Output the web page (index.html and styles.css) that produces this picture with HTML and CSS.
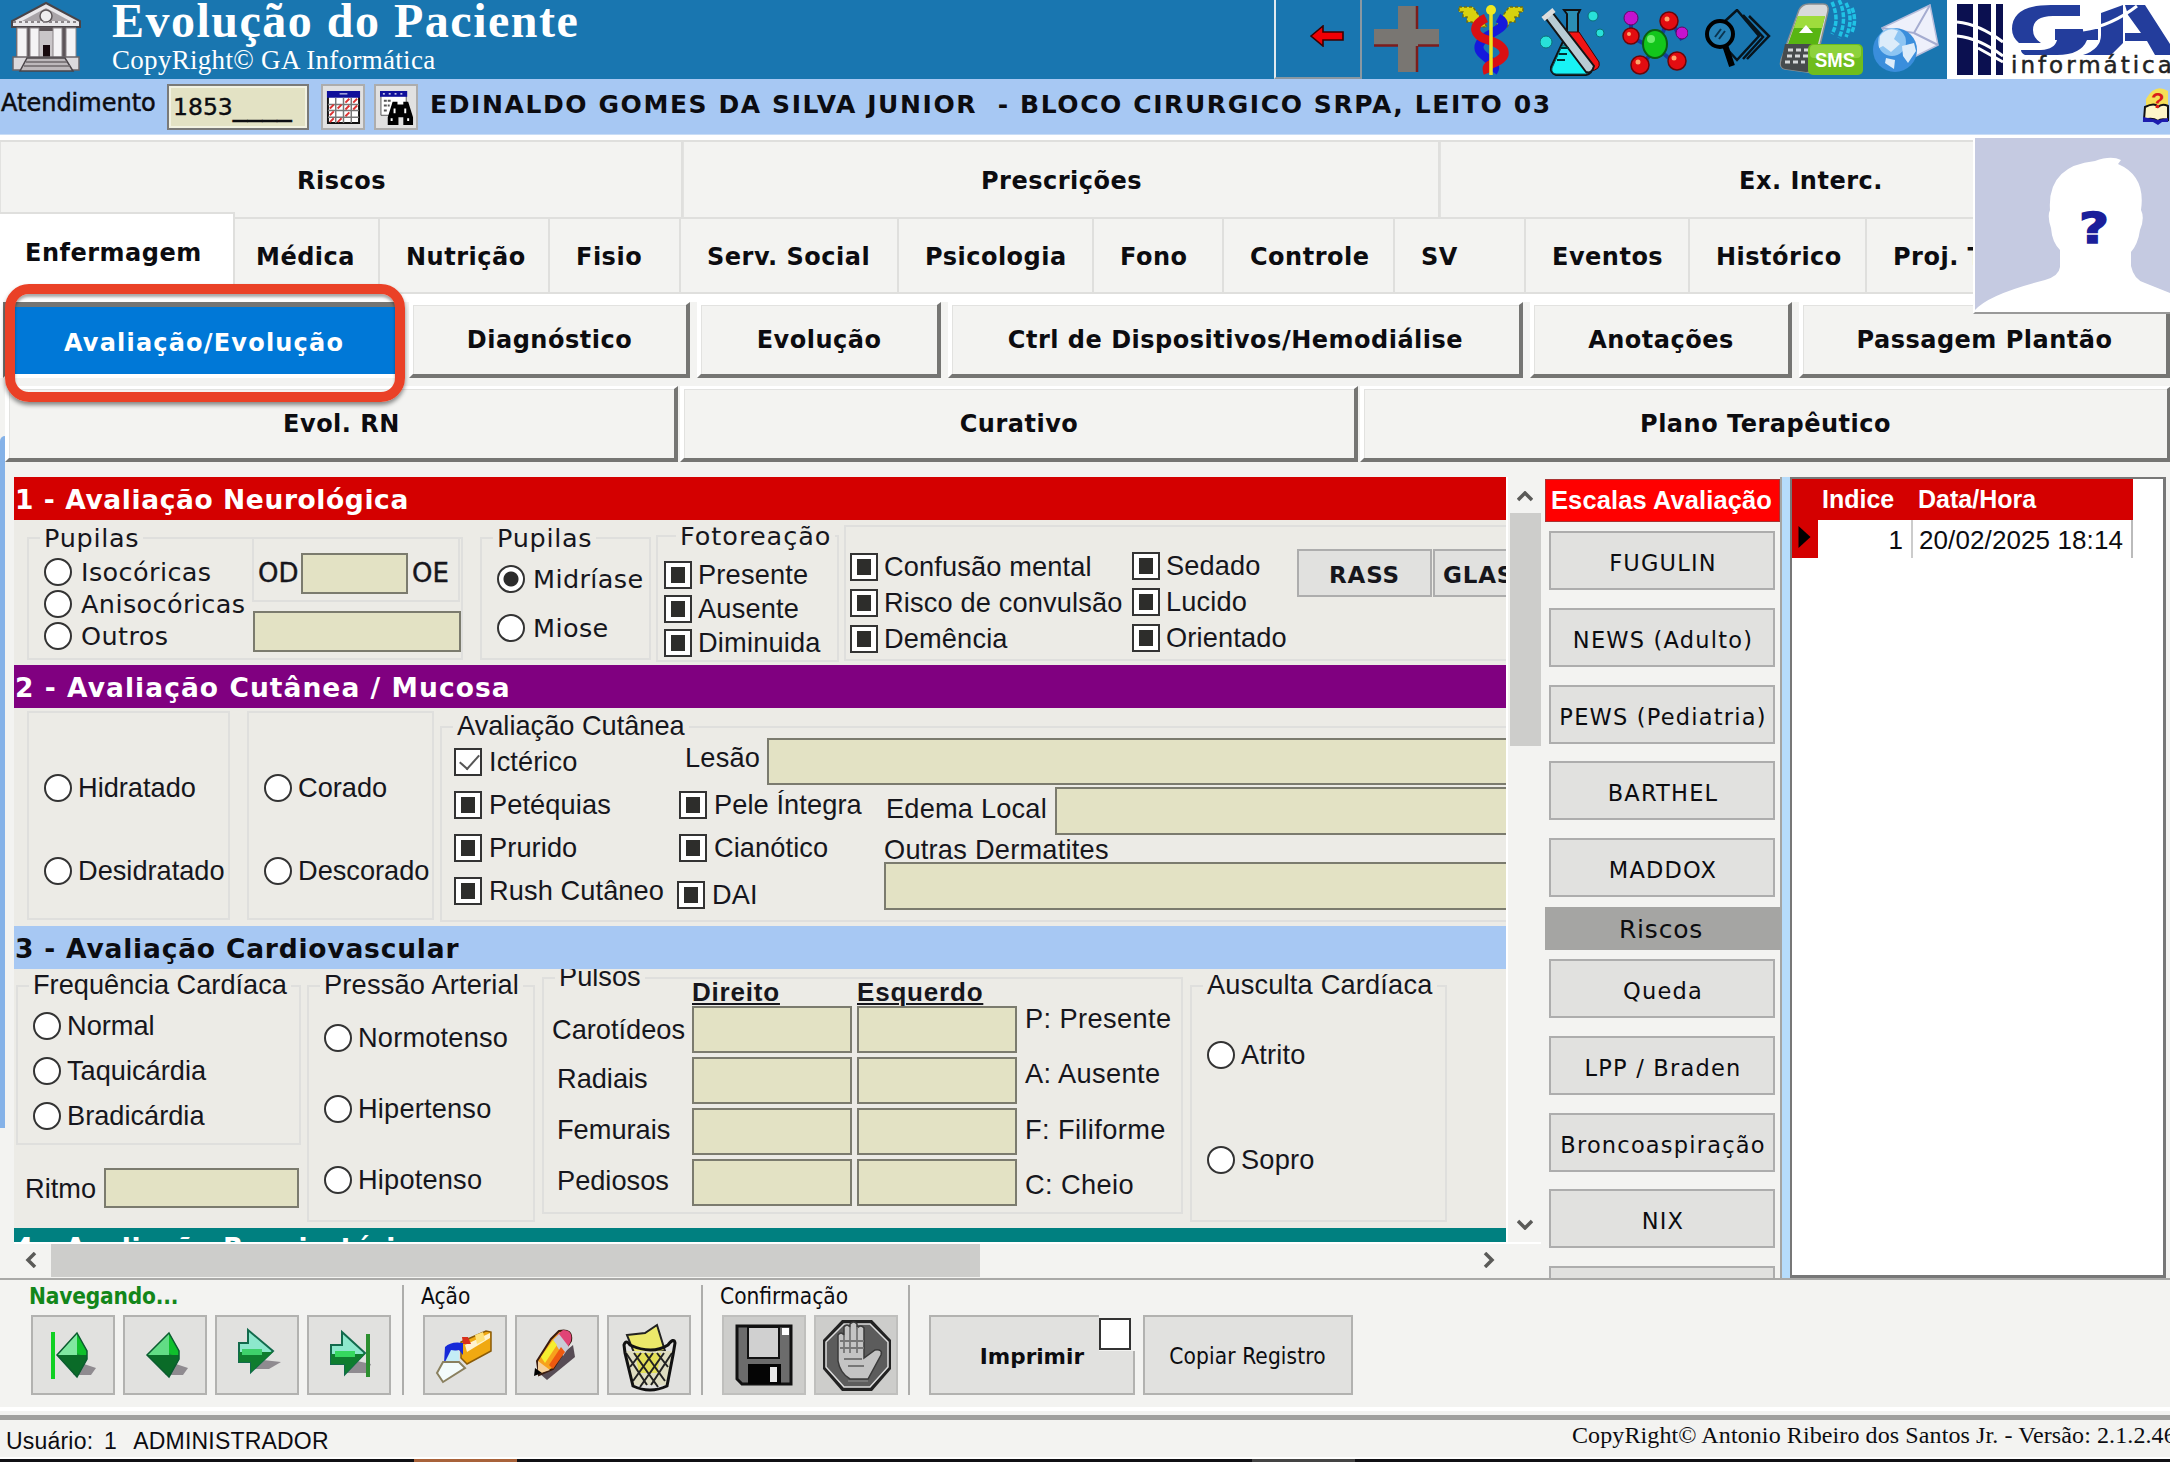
FILE: index.html
```html
<!DOCTYPE html>
<html lang="pt-BR">
<head>
<meta charset="utf-8">
<title>Evolução do Paciente</title>
<link rel="stylesheet" href="styles.css">
</head>
<body>
<header class="top">
  <svg class="temple" viewBox="0 0 72 72">
    <path d="M36 2 L70 20 V26 H2 V20Z" fill="#e9e7ea" stroke="#4a4448" stroke-width="2"/>
    <path d="M36 7 L60 20 H12Z" fill="#a9a4a8"/>
    <circle cx="36" cy="15" r="6" fill="#efeef0" stroke="#5c5659" stroke-width="1.5"/>
    <path d="M6 26h60v32H6z" fill="#5d5559"/>
    <path d="M28 30h16v28H28z" fill="#c9c5c8"/>
    <path d="M33 44h7v14h-7z" fill="#17090d"/>
    <g fill="#f4f3f5" stroke="#8a8488" stroke-width="1"><path d="M7 27h10v31H7zM20 27h9v31h-9zM43 27h9v31h-9zM56 27h10v31H56z"/></g>
    <path d="M3 56h66v13H3z" fill="#dcd9dc" stroke="#6a6468" stroke-width="1.5"/>
    <path d="M17 57h38l8 13H10z" fill="#bdb8bb" stroke="#4a4448" stroke-width="1.5"/>
    <path d="M16 61h41M14 65h46" stroke="#6f686c" stroke-width="1.5"/>
    <path d="M3 21h66" stroke="#8a8488" stroke-width="2" stroke-dasharray="3 3"/>
  </svg>
  <div class="brand"><h1>Evolução do Paciente</h1><p>CopyRight© GA Informática</p></div>
  <div class="back"><svg viewBox="0 0 34 22"><path d="M1 11 13 1v6h20v8H13v6z" fill="#f00005" stroke="#3a0000" stroke-width="1.6"/></svg></div>
  <div class="tools">
    <svg width="66" height="66" viewBox="0 0 66 66"><path d="M24 0h20v23h21v17H44v26H24V40H0V23h24z" fill="#797672"/><path d="M43 0v23M43 40v26M0 39.500h24M44 39.500h21" stroke="#7c1d1c" stroke-width="2.500"/></svg>
    <svg width="70" height="72" viewBox="0 0 70 72">
      <path d="M3 3h14l14 20H19l-3-5h-5v-5H7V8H3zM67 3H53L39 23h12l3-5h5v-5h4V8h4z" fill="#d8d20e" stroke="#6f6d10" stroke-width="1.500" stroke-dasharray="3 2"/>
      <path d="M42 14c18 10-16 14-19 28-2 12 22 14 14 26" fill="none" stroke="#1519dc" stroke-width="9"/>
      <path d="M30 14c-16 8-12 18 2 22 20 6 20 16 8 22-10 4-10 6-8 11" fill="none" stroke="#d81014" stroke-width="9"/>
      <path d="M35 3v68" stroke="#ece420" stroke-width="3.500"/><circle cx="35" cy="6" r="5" fill="#f0e820"/>
    </svg>
    <svg width="66" height="72" viewBox="0 0 66 72">
      <path d="M24 6h16l-2 4v20l14 34q0 6-6 7H16q-6-2-5-8l16-34V10z" fill="#2b8fb4" stroke="#111" stroke-width="2"/>
      <path d="M27 28h12l20 30q2 8-9 9l-12-2z" fill="#f21414" stroke="#400"/>
      <path d="M22 42h12l16 25-4 3H16q-5-1-4-6z" fill="#18f3f5" stroke="#0d4e5b"/>
      <path d="M4 12 12 8 54 62q-2 8-8 6z" fill="#b9ccd4" stroke="#151515" stroke-width="2"/>
      <path d="M3 15 14 6" stroke="#ddd" stroke-width="5"/>
      <path d="M21 44h8M19 50h8M17 56h8" stroke="#033" stroke-width="2"/>
      <g fill="#28e1d9" stroke="#0b6f78"><circle cx="6" cy="38" r="6"/><circle cx="53" cy="12" r="5"/><circle cx="60" cy="29" r="4"/></g>
    </svg>
    <svg width="66" height="64" viewBox="0 0 66 64">
      <path d="M9 8v18l24 12L46 10M52 15l8 14M33 38 18 56M36 38l18 15" fill="none" stroke="#143a9e" stroke-width="4"/>
      <ellipse cx="33" cy="33" rx="12" ry="14" fill="#13c61c" stroke="#0b5d12" stroke-width="2"/><circle cx="29" cy="28" r="4" fill="#6dee6c"/>
      <g fill="#e30d11" stroke="#6b0508" stroke-width="1.500"><circle cx="9" cy="25" r="8"/><circle cx="47" cy="10" r="9"/><circle cx="18" cy="54" r="9"/><circle cx="55" cy="50" r="9"/></g>
      <g fill="#c413cf" stroke="#5d0862"><circle cx="9" cy="7" r="7"/><circle cx="60" cy="22" r="6"/></g>
      <g fill="#ffa46a"><circle cx="7" cy="23" r="2"/><circle cx="45" cy="8" r="2.500"/><circle cx="16" cy="51" r="2.500"/><circle cx="52" cy="47" r="2.500"/></g>
    </svg>
    <svg width="68" height="60" viewBox="0 0 68 60">
      <path d="M18 14 32 1l22 26-22 24-10-11M38 6l20 22-20 22M44 7l20 20-22 23" fill="none" stroke="#07141c" stroke-width="2.500"/>
      <circle cx="15" cy="25" r="13" fill="#2682b8" stroke="#000" stroke-width="4"/><path d="m10 28 6-8M14 30l6-8" stroke="#0b3550" stroke-width="2"/>
      <path d="m20 36 7 21" stroke="#000" stroke-width="6"/>
    </svg>
    <svg width="86" height="78" viewBox="0 0 86 78">
      <path d="M20 10q3-6 10-6h14q6 0 5 7L36 66q-2 7-8 6L6 69q-6-1-4-9z" fill="#d8dadb" stroke="#8b8f91" stroke-width="1.500"/>
      <path d="M6 44h32l-5 24q-1 4-6 4L6 69q-5-1-4-7z" fill="#474b4d"/>
      <path d="M19 16h27l-7 28H9z" fill="#58b512"/><path d="M19 16h27l-3 12H15z" fill="#9fdc3c"/>
      <path d="m20 33 7-8 7 8z" fill="#fff"/>
      <path d="M9 50h22M8 56h22M6 62h20" stroke="#d5d8da" stroke-width="3" stroke-dasharray="5 3"/>
      <path d="M53 2q8 18 0 32M60 0q9 18 0 38M67 3q8 16 0 34M73 8q5 12 0 24" fill="none" stroke="#20c3e5" stroke-width="3.500" stroke-dasharray="5 1.500"/>
      <rect x="29" y="44" width="55" height="31" rx="5" fill="#6fbd1d"/><rect x="31" y="45" width="51" height="13" rx="4" fill="#8dd23c"/>
      <text x="56" y="67" class="sms" text-anchor="middle" textLength="40" lengthAdjust="spacingAndGlyphs">SMS</text>
    </svg>
    <svg width="68" height="70" viewBox="0 0 68 70">
      <path d="M10 24 58 1l8 40-34 17z" fill="#eef0fb" stroke="#b7bddb" stroke-width="1.500"/>
      <path d="m10 24 32 5L58 1M42 29l24 12" fill="none" stroke="#a5acd0" stroke-width="2"/>
      <circle cx="23" cy="46" r="22" fill="#3a8edc"/><circle cx="20" cy="38" r="14" fill="#8dc5f3"/>
      <path d="M8 32q8-10 18-5l-4 8 6 5-9 8-8-6-4 2zM30 42l12-3 2 8-8 12-5-7zM14 54l9 2-1 9-9-6z" fill="#dcecfa"/>
    </svg>
  </div>
  <div class="logo">
    <svg viewBox="0 0 223 79">
      <g fill="#0b1050"><path d="M10 4h16v71H10zM31 4h13v71H31zM49 4h7v71h-7z"/></g>
      <path d="M10 22q22 2 46 20M10 36q22 2 46 20M31 48l25 14" stroke="#fff" stroke-width="3" fill="none"/>
      <path d="M133 5H104Q65 5 65 29q0 8 7 14h22q-8-5-8-13 0-14 20-14h27z" fill="#233d9c"/>
      <path d="M108 29h43v11h-11q-6 15-30 15H78q-4-2-4-5h20q14-1 16-10h-2z" fill="#233d9c"/>
      <path d="M154 13 176 5v38l-12 12h-28q18-6 18-20z" fill="#233d9c"/>
      <path d="M178 5h20l32 50h-22l-8-14h-22v-8h16l-13-18z" fill="#233d9c"/>
      <path d="M136 30q28-4 54-24" stroke="#fff" stroke-width="3" fill="none"/>
      <text x="64" y="73" class="logotext">informática</text>
    </svg>
  </div>
</header>

<div class="patient">
  <span class="plabel">Atendimento</span>
  <span class="pinput">1853<span class="blank">____</span></span>
  <span class="pbtn"><svg viewBox="0 0 36 36"><path d="M2 2h32v32H2z" fill="#fff" stroke="#111" stroke-width="2"/><path d="M1 1h34v7H1z" fill="#10109a"/><path d="M14 4h8" stroke="#fff"/><path d="M10 8v26M18 8v26M26 8v26M2 15h32M2 21h32M2 28h32" stroke="#777" stroke-width="1.500"/><path d="m4 19 4-4M20 13l4-4M28 13l4-4M12 19l4-4M20 20l4-4M28 20l4-4M4 26l4-4M12 33l4-4M20 27l4-4M4 33l4-4" stroke="#d33" stroke-width="2"/></svg></span>
  <span class="pbtn"><svg viewBox="0 0 36 36"><path d="M2 2h26v24H2z" fill="#fff" stroke="#555"/><path d="M1 1h28v6H1z" fill="#10109a"/><path d="M4 4h22" stroke="#fff" stroke-width="1.500" stroke-dasharray="2 4"/><path d="M5 11h8M5 16h6M5 21h4" stroke="#555" stroke-width="2" stroke-dasharray="3 1"/><path d="M14 12h5v3h6v-3h5l5 16v8h-10v-8h-5v8H9v-8z" fill="#000"/><path d="M16 19v5M27 19v5M13 29v3M30 29v3" stroke="#fff" stroke-width="2"/></svg></span>
  <strong class="pname">EDINALDO GOMES DA SILVA JUNIOR&nbsp; - BLOCO CIRURGICO SRPA, LEITO 03</strong>
  <svg class="help" viewBox="0 0 26 38"><path d="M4 12q9-16 22-8v26H4z" fill="#f5df57"/><path d="M3 20q10-5 13 0 4-4 10-1v14q-7-2-10 1-6-4-14-1z" fill="#fdf6c8" stroke="#111" stroke-width="2"/><path d="M1 30v5h10l5 3 4-3h6v-4l-10 2z" fill="#1d1dae"/><text x="9" y="21" class="helpq">?</text></svg>
</div>

<nav class="tabs1"><span>Riscos</span><span>Prescrições</span><span>Ex. Interc.</span></nav>
<nav class="tabs2"><span class="on">Enfermagem</span><span class="med">Médica</span><span>Nutrição</span><span>Fisio</span><span>Serv. Social</span><span>Psicologia</span><span>Fono</span><span>Controle</span><span>SV</span><span>Eventos</span><span>Histórico</span><span>Proj. Terap.</span></nav>
<nav class="btns1"><span class="on">Avaliação/Evolução</span><span>Diagnóstico</span><span>Evolução</span><span>Ctrl de Dispositivos/Hemodiálise</span><span>Anotações</span><span>Passagem Plantão</span></nav>
<nav class="btns2"><span>Evol. RN</span><span>Curativo</span><span>Plano Terapêutico</span></nav>

<main class="work">
  <div class="edge"></div>
  <div class="scroller">
    <div class="form">
      <h2 class="red">1 - Avaliação Neurológica</h2>
      <section class="s1 vd">
        <div class="g pup">
          <span class="lg">Pupilas</span>
          <div class="pupgrid">
            <div class="puprad"><label><i class="r"></i>Isocóricas</label><label><i class="r"></i>Anisocóricas</label><label><i class="r"></i>Outros</label></div>
            <div class="pupin"><div class="odoe"><span>OD</span><b class="in od"></b><span>OE</span></div><b class="in obs"></b></div>
          </div>
        </div>
        <div class="g pup2"><span class="lg">Pupilas</span><label><i class="r sel"></i>Midríase</label><label><i class="r"></i>Miose</label></div>
        <div class="g foto"><span class="lg">Fotoreação</span><label><i class="c"></i>Presente</label><label><i class="c"></i>Ausente</label><label><i class="c"></i>Diminuida</label></div>
        <div class="g mental ar">
          <div class="m1"><label><i class="c"></i>Confusão mental</label><label><i class="c"></i>Risco de convulsão</label><label><i class="c"></i>Demência</label></div>
          <div class="m2"><label><i class="c"></i>Sedado</label><label><i class="c"></i>Lucido</label><label><i class="c"></i>Orientado</label></div>
          <span class="sb">RASS</span><span class="sb cut">GLASGOW</span>
        </div>
      </section>
      <h2 class="purple">2 - Avaliação Cutânea / Mucosa</h2>
      <section class="s2 ar">
        <div class="g hid"><label><i class="r"></i>Hidratado</label><label><i class="r"></i>Desidratado</label></div>
        <div class="g cor"><label><i class="r"></i>Corado</label><label><i class="r"></i>Descorado</label></div>
        <div class="g cut2">
          <span class="lg">Avaliação Cutânea</span>
          <div class="cutcols">
            <div class="k1"><label><i class="c chk"></i>Ictérico</label><label><i class="c"></i>Petéquias</label><label><i class="c"></i>Prurido</label><label><i class="c"></i>Rush Cutâneo</label></div>
            <div class="k2">
              <div class="lesao"><span>Lesão</span><b class="in"></b></div>
              <div class="krest">
                <div class="k3"><label><i class="c"></i>Pele Íntegra</label><label><i class="c"></i>Cianótico</label><label class="dai"><i class="c"></i>DAI</label></div>
                <div class="k4"><div class="edema"><span>Edema Local</span><b class="in"></b></div><span class="od2">Outras Dermatites</span><b class="in derm"></b></div>
              </div>
            </div>
          </div>
        </div>
      </section>
      <h2 class="blue">3 - Avaliação Cardiovascular</h2>
      <section class="s3 ar">
        <div class="fcol">
          <div class="g freq"><span class="lg">Frequência Cardíaca</span><label><i class="r"></i>Normal</label><label><i class="r"></i>Taquicárdia</label><label><i class="r"></i>Bradicárdia</label></div>
          <div class="ritmo"><span>Ritmo</span><b class="in"></b></div>
        </div>
        <div class="g press"><span class="lg">Pressão Arterial</span><label><i class="r"></i>Normotenso</label><label><i class="r"></i>Hipertenso</label><label><i class="r"></i>Hipotenso</label></div>
        <div class="g pulsos">
          <span class="lg">Pulsos</span>
          <div class="pcols">
            <div class="pl"><span class="car">Carotídeos</span><span>Radiais</span><span>Femurais</span><span>Pediosos</span></div>
            <div class="pc"><u>Direito</u><b class="in"></b><b class="in"></b><b class="in"></b><b class="in"></b></div>
            <div class="pc"><u>Esquerdo</u><b class="in"></b><b class="in"></b><b class="in"></b><b class="in"></b></div>
            <div class="pk"><span>P: Presente</span><span>A: Ausente</span><span>F: Filiforme</span><span>C: Cheio</span></div>
          </div>
        </div>
        <div class="g ausc"><span class="lg">Ausculta Cardíaca</span><label><i class="r"></i>Atrito</label><label><i class="r"></i>Sopro</label></div>
      </section>
      <h2 class="teal">4 - Avaliação Respiratória</h2>
    </div>
    <div class="vbar"><svg viewBox="0 0 16 12"><path d="m1 9 7-7 7 7" /></svg><i></i><svg class="dn" viewBox="0 0 16 12"><path d="m1 3 7 7 7-7"/></svg></div>
    <div class="hbar"><svg viewBox="0 0 12 16"><path d="M10 1 3 8l7 7"/></svg><i></i><svg class="rt" viewBox="0 0 12 16"><path d="m2 1 7 7-7 7"/></svg></div>
  </div>
  <aside class="scales">
    <h3>Escalas Avaliação</h3>
    <span>FUGULIN</span><span>NEWS (Adulto)</span><span>PEWS (Pediatria)</span><span>BARTHEL</span><span>MADDOX</span>
    <h4>Riscos</h4>
    <span>Queda</span><span>LPP / Braden</span><span>Broncoaspiração</span><span>NIX</span><span></span>
  </aside>
  <div class="split"></div>
  <div class="grid">
    <div class="gh"><span>Indice</span><span>Data/Hora</span></div>
    <div class="gr"><i><svg viewBox="0 0 12 22"><path d="m0 0 12 11L0 22z"/></svg></i><span class="n">1</span><span class="d">20/02/2025 18:14</span></div>
  </div>
</main>

<footer class="bar">
  <div class="set nav">
    <span class="t">Navegando...</span>
    <div class="row">
      <span class="tb"><svg viewBox="0 0 84 80"><path d="M42 60h18l5-7-12-4z" fill="#8f8b90"/><path d="M46 18 56 36v8L46 62 26 40z" fill="#149a35"/><path d="M46 18v22H26z" fill="#7fe8a0"/><path d="M46 18 56 36v8L46 38z" fill="#0fc02c"/><path d="M26 40h30v4L46 62z" fill="#0a6b28"/><path d="M46 18 56 36v8L46 62 26 40z" fill="none" stroke="#0b5c30" stroke-width="1.500"/><path d="M22 17v47" stroke="#10d023" stroke-width="4"/></svg></span>
      <span class="tb"><svg viewBox="0 0 84 80"><path d="M42 60h18l5-7-12-4z" fill="#8f8b90"/><path d="M46 18 56 36v8L46 62 24 40z" fill="#149a35"/><path d="M46 18v22H24z" fill="#62dc85"/><path d="M46 18 56 36v8L46 38z" fill="#0fc02c"/><path d="M24 40h32v4L46 62z" fill="#0a6b28"/><path d="M46 18 56 36v8L46 62 24 40z" fill="none" stroke="#0b5c30" stroke-width="1.500"/></svg></span>
      <span class="tb"><svg viewBox="0 0 84 80"><path d="M36 54h18l12-7-18-2z" fill="#8f8b90"/><path d="M33 15 58 36 36 57V47H24V28h9z" fill="#8de8cc" stroke="#126a4c" stroke-width="2"/><path d="M24 37h34L36 57V47H24z" fill="#0f7d2f"/><path d="M27 34h20v6H27z" fill="#3ed06b"/></svg></span>
      <span class="tb"><svg viewBox="0 0 84 80"><path d="M38 58h22l4-9-14-3z" fill="#8f8b90"/><path d="M35 17 58 38 38 59V49H24V30h11z" fill="#8de8cc" stroke="#126a4c" stroke-width="2"/><path d="M24 39h34L38 59V49H24z" fill="#0f7d2f"/><path d="M28 36h20v6H28z" fill="#35d85f"/><path d="M61 19v43" stroke="#2c8f2f" stroke-width="4"/></svg></span>
    </div>
  </div>
  <div class="set acao">
    <span class="t">Ação</span>
    <div class="row">
      <span class="tb"><svg viewBox="0 0 84 80"><path d="m38 27 25-11 5 1v19L44 49l-6-6z" fill="#f0a911" stroke="#8a5b08" stroke-width="1.500"/><path d="m42 30 25-12v5L44 37z" fill="#fff3cf"/><path d="m52 20 8-3 2 8-8 4z" fill="#ffe27a"/><path d="M39 22h6l3 7h-8z" fill="#d8301c"/><path d="M22 32q6-6 18-4v12l-4-5-8 2-5 11h-2z" fill="#1629d8"/><path d="m28 35 8 1v11H22z" fill="#c4ecf6"/><path d="M20 47h16l6 6-22 14-6-9z" fill="#f3fbfb" stroke="#8a805f" stroke-width="2"/></svg></span>
      <span class="tb"><svg viewBox="0 0 84 80"><path d="M24 58 32 65 60 42 58 30z" fill="#574c55"/><path d="M22 46 36 24 44 16q14-3 12 10L38 54 24 60z" fill="#f7a11c" stroke="#3a1c10" stroke-width="2"/><path d="M42 20 48 15q10 0 8 11l-4 8z" fill="#e04476"/><path d="m38 25 6-6 10 13-6 9z" fill="#c9ccd6"/><path d="m26 42 12-17 4 5-12 18z" fill="#f6ee30"/><path d="m34 50 12-18 4 5-12 17z" fill="#ee5a10"/><path d="m23 46 12 9-12 4z" fill="#f5cf9a"/><path d="m20 53 7 5-8 3z" fill="#000"/></svg></span>
      <span class="tb"><svg viewBox="0 0 84 80"><path d="m20 20 18-2 12-8 8 26-30 4z" fill="#ece96a" stroke="#222" stroke-width="2"/><path d="M18 36h48l-7 34H26z" fill="#dedcc0"/><path d="M28 38h26l-4 20H32z" fill="#e2de58"/><path d="M19 38 40 70M27 38l24 34M38 38l20 28M50 38l11 14M65 38 44 70M57 38 33 72M46 38 26 66M34 38l-11 14" stroke="#222" stroke-width="2"/><path d="M17 30q2-6 6 0 22 10 38 0 6-8 7-2l-2 12-6 31q-17 8-34 0l-8-33z" fill="none" stroke="#111" stroke-width="3"/></svg></span>
    </div>
  </div>
  <div class="set conf">
    <span class="t">Confirmação</span>
    <div class="row">
      <span class="tb dis"><svg viewBox="0 0 84 80"><path d="M15 11h54v58H20l-5-5z" fill="#6c6c6c" stroke="#111" stroke-width="3"/><path d="M26 12h31v31H26z" fill="#d0d0d0" stroke="#111" stroke-width="2"/><path d="M60 13h7v7h-7z" fill="#fff"/><path d="M26 49h33v20H26z" fill="#050505"/><path d="M48 52h7v15h-7z" fill="#e8e8e8"/></svg></span>
      <span class="tb dis"><svg viewBox="0 0 84 80"><path d="M28 5h30l19 20v29L58 76H28L9 54V25z" fill="#222" /><path d="M30 9h26l18 18v25L56 72H30L12 52V27z" fill="#5c5c5c" stroke="#ddd" stroke-width="1.500"/><path d="M24 46V20q3-4 6 0V12q3-4 6 0V9q4-4 7 0v4q4-4 7 0v30l11-8q8-1 6 5L54 64H36q-10-6-12-18z" fill="#c4c4c4" stroke="#3a3a3a" stroke-width="1.500"/><path d="M30 20v18M36 12v26M43 12v26M26 26h24M26 33h24M30 44h18M34 51h16M34 66h20" stroke="#777" stroke-width="1.800"/></svg></span>
    </div>
  </div>
  <div class="print"><strong>Imprimir</strong><i></i></div>
  <div class="copy">Copiar Registro</div>
</footer>
<div class="status"><span class="user">Usuário:&nbsp; 1&nbsp; &nbsp;ADMINISTRADOR</span><span class="ver">CopyRight© Antonio Ribeiro dos Santos Jr. - Versão: 2.1.2.46</span></div>
<div class="desk"><i></i><b></b></div>

<div class="photo"><svg viewBox="0 0 197 174"><path d="M0 172Q14 156 70 142q14-4 15-13V112q-8-8-9-22-4-12-1-18-3-44 45-49 16-6 26-1l-3 4q28 12 23 46 4 8-1 20-2 14-9 22v14q3 14 14 17l30 12v32H0z" fill="#fff"/><text x="119" y="105" text-anchor="middle" textLength="30" lengthAdjust="spacingAndGlyphs">?</text></svg></div>
<div class="mark"></div>
</body>
</html>
```
FILE: styles.css
```css
* { box-sizing: border-box; }
body { margin: 0; width: 2170px; height: 1462px; overflow: hidden; background: #f3f3f1; color: #0c0c10; position: relative; font-family: "DejaVu Sans", sans-serif; white-space: nowrap; }
h1, h2, h3, h4, p { margin: 0; }
i, u, b { font-style: normal; display: block; }

.top { height: 79px; background: #1976b0; display: flex; overflow: hidden; }
.temple { width: 72px; height: 72px; margin: 1px 0 0 10px; flex: none; }
.brand { width: 1192px; margin-left: 30px; flex: none; color: #fff; font-family: "Liberation Serif", serif; }
.brand h1 { font-size: 48px; line-height: 42px; height: 42px; letter-spacing: 1.5px; font-weight: 700; }
.brand p { font-size: 27px; line-height: 36px; letter-spacing: .3px; }
.back { width: 88px; margin-left: -30px; border-left: 2px solid #dfe9f0; border-right: 2px solid #8a98a2; border-bottom: 2px solid #8a98a2; padding: 25px 0 0 34px; flex: none; }
.back svg { width: 34px; height: 22px; display: block; }
.tools { display: flex; align-items: flex-start; width: 585px; padding: 4px 0 0 12px; gap: 16px; flex: none; }
.tools svg { flex: none; }
.tools svg:nth-child(1) { margin-top: 2px; }
.tools svg:nth-child(3) { margin-left: -2px; }
.tools svg:nth-child(4) { margin: 7px 0 0; }
.tools svg:nth-child(5) { margin: 5px 0 0 1px; }
.tools svg:nth-child(6) { margin: -4px 0 0 -10px; }
.tools svg:nth-child(7) { margin-left: -9px; }
.sms { font: 700 21px "Liberation Sans", sans-serif; fill: #fff; }
.logo { width: 223px; background: #fff; flex: none; }
.logo svg { display: block; width: 223px; height: 79px; }
.logotext { font: 23px "DejaVu Sans", sans-serif; letter-spacing: 3px; fill: #222; stroke: #222; stroke-width: .5; }

.patient { height: 56px; background: #a7c8f3; display: flex; align-items: flex-start; padding: 5px 0 0 1px; border-bottom: 1px solid #c9ddf6; }
.plabel { width: 166px; font-size: 24px; line-height: 38px; -webkit-text-stroke: .5px #0c0c10; }
.pinput { width: 142px; height: 46px; border: 2px solid #7a7a78; box-shadow: inset 0 0 0 2px #f2f2e2; background: #e3e2c4; padding-left: 4px; font-size: 23.500px; line-height: 42px; -webkit-text-stroke: .4px #0c0c10; margin-right: 12px; }
.blank { font-size: 29.500px; line-height: 0; }
.pbtn { width: 44px; height: 46px; border: 2px solid #adadad; background: #e1e1e1; margin-right: 9px; padding: 4px 3px; }
.pbtn svg { display: block; width: 35px; height: 35px; }
.pname { font-size: 25px; line-height: 42px; letter-spacing: 1.6px; margin-left: 3px; width: 1711px; }
.help { width: 28px; height: 38px; margin-top: 3px; flex: none; }
.helpq { font: 700 22px "Liberation Sans", sans-serif; fill: #d81b1b; }

nav { display: grid; font-weight: 700; font-size: 24px; letter-spacing: .5px; }
.tabs1 { margin-top: 5px; box-shadow: 0 -5px 0 #fff; height: 77px; grid-template-columns: 683px 757px 742px; border-top: 2px solid #dfdfdd; }
.tabs1 span { display: grid; place-items: center; border-right: 2px solid #dfdfdd; padding: 2px 0 0 1px; border-left: 1px solid #e2e2e0; }
.tabs2 { height: 85px; grid-template-columns: 235px 145px 170px 131px 218px 195px 130px 171px 131px 164px 177px 304px; border-top: 2px solid #dfdfdd; border-bottom: 8px solid #fff; }
.tabs2 span { height: 75px; padding-left: 26px; line-height: 77px; border-right: 2px solid #dfdfdd; border-bottom: 2px solid #dfdfdd; }
.tabs2 .med { padding-left: 21px; }
.tabs2 .on { background: #fff; height: 82px; margin-top: -7px; padding: 0 0 0 25px; line-height: 79px; border-top: 2px solid #dfdfdd; border-bottom: 0; }
.btns1, .btns2 { height: 76px; }
.btns1 { gap: 7px; grid-template-columns: 399px 281px 244px 575px 262px 371px; padding-left: 4px; background: linear-gradient(90deg, #fff 4px, #f3f3f1 4px); margin-left: -1px; }
.btns2 { grid-template-columns: 673px 678px 811px; gap: 2px; margin: 8px 0 0 5px; }
nav.btns1 span, nav.btns2 span { display: grid; place-items: center; border: solid; border-width: 3px 4px 4px 4px; border-color: #fff #757573 #757573 #fff; box-shadow: inset 1px 1px 0 #e2e2e0; padding: 1px 0 0; }
nav.btns2 span { padding: 0; }
nav.btns1 .on { background: #0078d7; color: #fff; border-color: #757573 #fff #fff #757573; border-width: 5px 7px 4px 4px; box-shadow: none; padding: 4px 0 0 6px; letter-spacing: 1.2px; }

.work { display: flex; height: 803px; margin-top: 15px; border-bottom: 2px solid #a9a9a7; }
.edge { width: 5px; height: 692px; margin-top: -41px; background: #85b2e8; border-radius: 8px 0 0 0; }
.scroller { width: 1527px; margin-left: 9px; height: 801px; display: grid; grid-template: 765px 36px / 1492px 35px; flex: none; }
.form { overflow: hidden; background: #ecebe6; }
h2 { height: 43px; line-height: 45px; font-size: 26.500px; padding-left: 1px; font-weight: 700; }
.red { background: #d40000; color: #fff; letter-spacing: .6px; }
.purple { background: #800080; color: #fff; letter-spacing: 1.050px; }
.blue { background: #a7c8f3; letter-spacing: .8px; }
.teal { background: #008080; color: #fff; height: 40px; line-height: 40px; letter-spacing: .6px; }
section { display: flex; align-items: flex-start; color: #16161c; }
.vd { font-size: 25.500px; letter-spacing: .4px; }
.ar { font: 27.200px "Liberation Sans", sans-serif; letter-spacing: 0; }
.g { border: 2px solid #dfdfdd; flex: none; }
.lg { display: block; width: max-content; height: 30px; line-height: 30px; margin-top: -17px; background: #ecebe6; padding: 0 4px; }
label { display: flex; align-items: center; height: 28px; gap: 8px; line-height: 28px; }
.r { width: 28px; height: 28px; border: 2px solid #333; border-radius: 50%; background: #fff; flex: none; }
.sel { background: radial-gradient(circle, #2c2c2c 0 7px, #fff 8px); }
.c { width: 28px; height: 28px; border: 2px solid #333; background: linear-gradient(#2d2d2b, #2d2d2b) center / 14px 16px no-repeat #fff; flex: none; }
.chk { background: #fff; }
.chk::after { content: ""; display: block; width: 9px; height: 17px; margin: 0 0 0 8px; border: solid #555; border-width: 0 2px 2px 0; transform: rotate(42deg); }
.in { background: #e3e2c4; border: 2px solid #7b7b6e; }

.s1 { height: 145px; }
.s1 .pup { margin: 17px 0 0 13px; width: 436px; height: 123px; }
.pup .lg, .pup2 .lg { margin-left: 11px; margin-top: -16px; letter-spacing: .7px; }
.pupgrid { display: flex; }
.puprad { width: 223px; padding: 5px 0 0 15px; display: grid; gap: 4px; align-content: start; flex: none; }
.puprad label { gap: 9px; }
.pupin { margin-top: -14px; }
.odoe { width: 208px; height: 63px; border: 2px solid #dfdfdd; border-top: 0; display: flex; align-items: center; padding: 7px 0 0 4px; letter-spacing: 0; font-size: 26px; -webkit-text-stroke: .4px #16161c; }
.od { width: 107px; height: 41px; margin: 0 4px 0 1px; }
.odoe span { width: 42px; }
.obs { width: 208px; height: 41px; margin: 9px 0 0 1px; }
.s1 .pup2 { margin: 17px 0 0 17px; width: 171px; height: 123px; }
.pup2 label { margin: 12px 0 21px 15px; gap: 8px; }
.s1 .foto { margin: 15px 0 0 5px; width: 183px; height: 127px; font: 27.200px "Liberation Sans", sans-serif; letter-spacing: .2px; }
.foto .lg { margin: -16px 0 0 18px; font: 25.500px/30px "DejaVu Sans", sans-serif; letter-spacing: 1px; }
.foto label { margin: 10px 0 6px 6px; gap: 6px; }
.foto label + label { margin: 6px 0 4px 6px; }
.s1 .mental { margin: 5px 0 0 5px; width: 670px; height: 136px; display: flex; letter-spacing: .15px; }
.m1 { width: 284px; padding: 26px 0 0 4px; display: grid; gap: 8px; align-content: start; flex: none; }
.m2 { width: 165px; padding: 25px 0 0 2px; display: grid; gap: 8px; align-content: start; flex: none; }
.m1 label, .m2 label { gap: 6px; }
.sb { width: 135px; height: 48px; margin: 22px 1px 0 2px; border: 2px solid #adadad; background: #e1e1df; font: 700 23px/49px "DejaVu Sans", sans-serif; letter-spacing: .8px; text-align: center; flex: none; }
.cut { margin-left: 0; text-align: left; padding-left: 8px; }

.s2 { height: 218px; }
.hid, .cor { height: 209px; margin-top: 3px; padding: 61px 0 0 15px; }
.hid { width: 203px; margin-left: 13px; }
.cor { width: 187px; margin-left: 17px; }
.hid label, .cor label { margin-bottom: 55px; gap: 6px; }
.cut2 { margin: 18px 0 0 6px; width: 1070px; height: 196px; }
.cut2 .lg { margin-left: 11px; }
.cutcols { display: flex; }
.k1 { width: 236px; padding: 7px 0 0 12px; display: grid; gap: 15px; align-content: start; flex: none; }
.k2 { flex: 1; margin-top: -3px; }
.lesao { display: flex; line-height: 40px; padding-left: 7px; letter-spacing: .2px; }
.lesao .in { width: 780px; height: 47px; margin-left: 7px; }
.krest { display: flex; }
.k3 { width: 206px; padding: 6px 0 0 1px; display: grid; gap: 15px; align-content: start; flex: none; }
.k3 .dai { margin: 4px 0 0 -2px; }
.k3 label, .k1 label { gap: 7px; letter-spacing: .1px; }
.edema { display: flex; padding-left: 2px; line-height: 43px; margin-top: 2px; letter-spacing: .2px; }
.edema .in { width: 480px; height: 48px; margin-left: 8px; }
.od2 { display: block; height: 27px; line-height: 29px; letter-spacing: .25px; }
.derm { width: 650px; height: 48px; }

.s3 { height: 259px; overflow: hidden; }
.fcol { width: 293px; flex: none; }
.freq { width: 285px; height: 160px; margin: 16px 0 0 2px; }
.freq .lg, .press .lg, .ausc .lg { margin-left: 11px; }
.freq label { margin: 12px 0 17px 15px; gap: 6px; }
.freq label + label { margin-top: 0; }
.ritmo { display: flex; line-height: 41px; padding: 23px 0 0 11px; }
.ritmo .in { width: 195px; height: 40px; margin-left: 8px; }
.press { width: 228px; height: 237px; margin-top: 16px; letter-spacing: .2px; }
.press label { margin: 24px 0 43px 15px; gap: 6px; }
.press label + label { margin-top: 0; }
.pulsos { width: 641px; height: 237px; margin: 8px 0 0 7px; }
.pulsos .lg { margin-left: 11px; }
.pcols { display: flex; margin-top: -5px; line-height: 28px; }
.pl { width: 148px; padding: 29px 0 0 13px; flex: none; }
.pl span { display: block; height: 51px; }
.pl .car { margin-left: -5px; height: 49px; }
.pc { width: 160px; margin-right: 5px; flex: none; }
.pc u { height: 28px; margin-top: -9px; font-weight: 700; font-size: 26px; letter-spacing: .8px; line-height: 28px; text-decoration-thickness: 2px; text-underline-offset: 2px; }
.pc .in { height: 47px; margin-bottom: 4px; position: relative; }
.pk { padding: 18px 0 0 3px; letter-spacing: .4px; }
.pk span { display: block; height: 55.300px; }
.ausc { width: 257px; height: 237px; margin: 16px 0 0 7px; letter-spacing: .2px; }
.ausc label { margin: 41px 0 77px 15px; gap: 6px; }
.ausc label + label { margin-top: 0; }

.vbar { background: #f3f3f1; padding-left: 2px; border-left: 2px solid #fff; }
.vbar svg { display: block; width: 16px; height: 12px; margin: 14px 0 10px 7px; }
.vbar i { width: 31px; height: 233px; background: #cdcdcb; }
.vbar .dn { margin-top: 472px; }
.vbar path, .hbar path { fill: none; stroke: #5a5a58; stroke-width: 3.500; }
.hbar { grid-column: 1 / 3; display: flex; background: #f3f3f1; border-top: 2px solid #fff; }
.hbar svg { width: 12px; height: 16px; margin: 8px 14px 0 11px; }
.hbar i { width: 929px; height: 33px; background: #cdcdcb; }
.hbar .rt { margin-left: 503px; }
.scales { width: 237px; margin-left: 4px; border-right: 2px solid #a5a5a3; height: 801px; overflow: hidden; padding-top: 2px; font-size: 22.500px; letter-spacing: 1.2px; flex: none; text-align: center; }
.scales h3 { height: 43px; background: #f00; color: #fff; font: 700 25.500px/40px "Liberation Sans", sans-serif; letter-spacing: .1px; border: 1px solid #a33; padding-right: 2px; }
.scales h4 { height: 43px; background: #a5a5a3; font-weight: 400; font-size: 25px; letter-spacing: .8px; line-height: 45px; margin: -8px 0 9px; padding-right: 3px; }
.scales span { display: block; margin: 0 5px 17.800px 4px; height: 59px; border: 2px solid #adadad; background: #e1e1df; line-height: 60px; padding-left: 2px; }
.scales h3 + span { margin-top: 9px; }
.split { width: 9px; background: #b6dcfb; }
.grid { width: 376px; height: 801px; background: #fff; border: 2px solid #777; border-width: 2px 3px 3px 2px; font: 26px "Liberation Sans", sans-serif; flex: none; margin-left: -1px; }
.gh { width: 341px; height: 41px; background: #d40000; color: #fff; font-weight: 700; font-size: 25px; line-height: 41px; display: flex; padding-left: 30px; }
.gh span:first-child { width: 96px; }
.gr { display: flex; height: 38px; line-height: 40px; }
.gr i { width: 26px; background: #d40000; padding: 6px 0 0 6px; }
.gr svg { width: 13px; height: 22px; display: block; }
.n { width: 95px; text-align: right; padding-right: 8px; border-right: 2px solid #ccc; }
.d { width: 220px; padding-left: 6px; border-right: 2px solid #bbb; letter-spacing: .1px; }

.bar { height: 131px; display: flex; padding: 5px 0 0 12px; font-family: "DejaVu Sans Condensed", "DejaVu Sans", sans-serif; font-size: 22.500px; border-bottom: 4px solid #fff; }
.set { border-right: 2px solid #adadab; height: 110px; padding-left: 19px; flex: none; }
.set .t { display: block; height: 30px; line-height: 23px; margin-left: -2px; }
.nav { width: 392px; }
.nav .t { color: #12861a; font-weight: 700; letter-spacing: -.2px; }
.acao { width: 299px; }
.conf { width: 207px; }
.row { display: flex; gap: 8px; }
.tb { width: 84px; height: 80px; border: 2px solid #b2b2b0; background: #e1e1df; flex: none; }
.tb svg { display: block; width: 84px; height: 80px; margin: -2px; }
.dis { background: #cdcdcb; border-color: #bfbfbd; }
.print, .copy { height: 80px; margin-top: 30px; border: 2px solid #b2b2b0; background: #e1e1df; line-height: 78px; flex: none; }
.print { width: 206px; margin-left: 19px; display: flex; justify-content: flex-end; font: 700 21.500px/79px "DejaVu Sans", sans-serif; }
.print strong { margin-right: 15px; }
.print i { width: 36px; height: 36px; background: #f3f3f1; margin: -2px -2px 0 0; padding-top: 3px; }
.print i::before { content: ""; display: block; width: 28px; height: 28px; border: 2px solid #333; background: #fff; }
.copy { width: 210px; margin-left: 8px; text-align: center; letter-spacing: .1px; padding-right: 1px; }
.status { height: 44px; border-top: 5px solid #a0a09e; margin-top: 4px; display: flex; justify-content: space-between; border-bottom: 2px solid #fff; padding-left: 6px; }
.user { font: 23px/43px "Liberation Sans", sans-serif; letter-spacing: .2px; word-spacing: -1.200px; }
.ver { font: 24px/30px "Liberation Serif", serif; width: 598px; letter-spacing: .1px; }
.desk { height: 3px; background: #101014; display: flex; padding-left: 414px; }
.desk i { width: 103px; background: #a8623a; }
.desk b { width: 103px; margin-left: 735px; background: #444; }

.photo { position: absolute; left: 1973px; top: 138px; width: 197px; height: 176px; background: #c5cae1; border-left: 2px solid #fff; border-bottom: 2px solid #999; }
.photo svg { display: block; width: 197px; height: 174px; }
.photo text { font: 700 42px "DejaVu Sans", sans-serif; fill: #1b1e9a; stroke: #1b1e9a; stroke-width: 1.500; }
.mark { position: absolute; left: 5px; top: 284px; width: 400px; height: 118px; border: 10px solid #ea4127; border-radius: 24px; box-shadow: 0 3px 4px rgba(0,0,0,.45), inset 0 3px 3px rgba(0,0,0,.35); }
```
